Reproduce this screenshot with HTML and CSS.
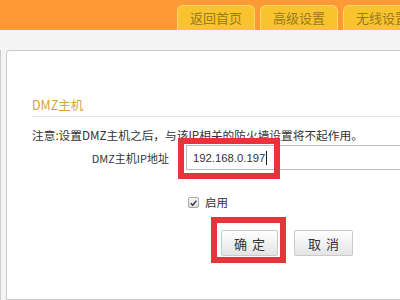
FILE: index.html
```html
<!DOCTYPE html>
<html lang="zh-CN">
<head>
    <meta charset="UTF-8">
    <meta name="viewport" content="width=device-width, initial-scale=1.0">
    <title>DMZ主机</title>
    <link rel="stylesheet" href="styles.css">
</head>
<body>
    <div class="header">
        <a class="tab">返回首页</a>
        <a class="tab">高级设置</a>
        <a class="tab">无线设置</a>
    </div>
    <div class="band"></div>
    <div class="layout">
        <ul class="sidebar">
            <li class="first"></li>
            <li></li>
            <li class="active"></li>
            <li></li>
            <li></li>
            <li></li>
            <li></li>
        </ul>
        <div class="panel">
            <h3 class="title">DMZ主机</h3>
            <p class="notice">注意:设置DMZ主机之后，与该IP相关的防火墙设置将不起作用。</p>
            <div class="row">
                <label class="label">DMZ主机IP地址</label>
                <span class="mark-wrap">
                    <input class="ip" type="text" value="192.168.0.197">
                    <span class="caret"></span>
                    <span class="mark mark-ip"></span>
                </span>
            </div>
            <div class="check-row">
                <span class="check">
                    <svg width="10" height="10" viewBox="0 0 10 10"><path d="M2 5.2 L4.2 7.4 L8.2 2.4" fill="none" stroke="#333" stroke-width="1.6"/></svg>
                </span>
                <span>启用</span>
            </div>
            <div class="buttons">
                <span class="mark-wrap">
                    <button class="btn ok">确 定</button>
                    <span class="mark mark-btn"></span>
                </span>
                <button class="btn">取 消</button>
            </div>
        </div>
    </div>
</body>
</html>
```

FILE: styles.css
```css
body {
    margin: 0;
    width: 400px;
    height: 300px;
    overflow: hidden;
    background: #f4f4f4;
    font-family: "Noto Sans CJK SC", sans-serif;
    font-size: 12px;
    color: #333;
}
.header {
    height: 30px;
    background: #fd9a37;
    display: flex;
    align-items: flex-end;
    padding-left: 177px;
    gap: 5px;
    overflow: hidden;
    white-space: nowrap;
}
.tab {
    flex: none;
    width: 76px;
    height: 24px;
    line-height: 24px;
    text-align: center;
    background: #f8c32c;
    border: 1px solid #fad86e;
    border-bottom: none;
    border-radius: 6px 6px 0 0;
    color: #9a7a22;
    font-size: 13px;
}
.band {
    height: 20px;
}
.layout {
    display: flex;
    gap: 5px;
    height: 250px;
}
.sidebar {
    width: 5px;
    margin: 0;
    padding: 0;
    list-style: none;
    background: #fff;
    border: 1px solid #ccc;
    border-left: none;
    border-radius: 0 4px 0 0;
}
.sidebar li {
    height: 34px;
    border-bottom: 1px solid #ddd;
}
.sidebar .first {
    height: 38px;
}
.sidebar .active {
    background: #fda91e;
}
.panel {
    flex: 1;
    background: #fff;
    border: 1px solid #ccc;
    border-right: none;
    border-radius: 4px 0 0 0;
    padding-left: 25px;
}
.title {
    margin: 0;
    padding-top: 46px;
    padding-bottom: 3px;
    font-size: 12.5px;
    line-height: 16px;
    font-weight: normal;
    color: #d9a43a;
    border-bottom: 1px solid #e8e8e8;
}
.notice {
    margin: 10px 0 0;
    line-height: 16px;
    font-size: 11.7px;
}
.row {
    display: flex;
    align-items: center;
    margin-top: 2px;
    height: 25px;
}
.label {
    width: 137px;
    margin-right: 17px;
    text-align: right;
    font-size: 11px;
}
.mark-wrap {
    position: relative;
    display: inline-block;
}
.ip {
    display: block;
    width: 230px;
    height: 25px;
    box-sizing: border-box;
    margin: 0;
    padding: 0 6px;
    border: 1px solid #bbb;
    font-family: "Liberation Sans", sans-serif;
    font-size: 11.3px;
    color: #333;
    outline: none;
}
.caret {
    position: absolute;
    left: 80px;
    top: 6px;
    width: 1px;
    height: 14px;
    background: #222;
}
.mark {
    position: absolute;
    border: 6px solid #e5343a;
    box-sizing: border-box;
}
.mark-ip {
    left: -8px;
    top: -7px;
    width: 102px;
    height: 41px;
}
.check-row {
    display: flex;
    align-items: center;
    margin-top: 24px;
    padding-left: 156px;
    line-height: 16px;
    gap: 6px;
    font-size: 11.5px;
}
.check {
    width: 9px;
    height: 9px;
    border: 1px solid #aaa;
    border-radius: 2px;
    background: linear-gradient(#fafafa, #dcdcdc);
    display: flex;
}
.buttons {
    display: flex;
    gap: 16px;
    margin-top: 20px;
    padding-left: 189px;
}
.btn {
    display: block;
    width: 59px;
    height: 26px;
    margin: 0;
    padding: 0;
    border: 1px solid #cacaca;
    border-radius: 2px;
    background: linear-gradient(#ffffff, #e4e4e4);
    font-family: "Noto Sans CJK SC", sans-serif;
    font-size: 13px;
    word-spacing: 2px;
    color: #333;
}
.ok {
    width: 57px;
}
.mark-btn {
    left: -10px;
    top: -13px;
    width: 75px;
    height: 46px;
}
```
